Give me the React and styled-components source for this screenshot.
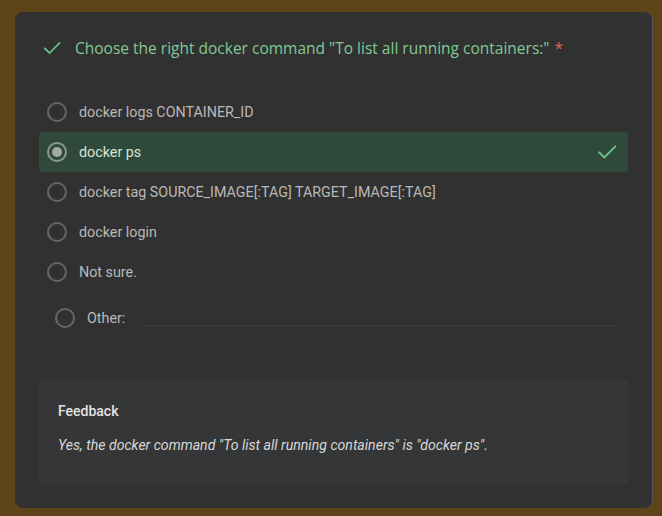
import React from "react";
import styled, { createGlobalStyle } from "styled-components";

const Global = createGlobalStyle`
  html, body { margin: 0; padding: 0; background: #5e4419; }
  body { width: 662px; height: 516px; overflow: hidden; font-family: Roboto, "Liberation Sans", sans-serif; }
`;

const Page = styled.div`
  width: 662px;
  height: 516px;
  box-sizing: border-box;
  padding: 12px 9px 8px 15px;
  display: flex;
`;

const Card = styled.div`
  flex: 1;
  background: #313131;
  border-radius: 8px;
  border-right: 1px solid #55555e;
  box-sizing: border-box;
  padding: 26px 24px 24px 24px;
  display: flex;
  flex-direction: column;
`;

const Title = styled.div`
  display: flex;
  align-items: center;
  gap: 13px;
  padding-left: 3px;
  color: #81c995;
  font-family: "Open Sans", sans-serif;
  font-size: 15.5px;
  line-height: 20px;
  height: 20px;
`;

const Req = styled.span`
  color: #e06055;
  margin-left: 5px;
`;

const Options = styled.div`
  display: flex;
  flex-direction: column;
  margin-top: 34px;
`;

const Option = styled.div`
  display: flex;
  align-items: center;
  height: 40px;
  padding: 0 10px 0 8px;
  border-radius: 4px;
  background: ${(p) => (p.$selected ? "#2f4a3b" : "transparent")};
  color: ${(p) => (p.$selected ? "#d6e3d9" : "#b9b9b9")};
  font-size: 14.3px;
`;

const Radio = styled.span`
  width: 20px;
  height: 20px;
  box-sizing: border-box;
  border-radius: 50%;
  border: 2px solid ${(p) => (p.$checked ? "#8e9690" : "#666666")};
  display: flex;
  align-items: center;
  justify-content: center;
  flex-shrink: 0;
  margin-right: 12px;
  &::after {
    content: "";
    width: 10px;
    height: 10px;
    border-radius: 50%;
    background: #a3aaa5;
    display: ${(p) => (p.$checked ? "block" : "none")};
  }
`;

const Label = styled.span`
  flex: 1;
`;

const OtherRow = styled.div`
  display: flex;
  align-items: center;
  height: 40px;
  padding-left: 16px;
  margin-top: 9px;
  color: #b9b9b9;
  font-size: 14.3px;
`;

const OtherInput = styled.div`
  flex: 1;
  align-self: flex-end;
  margin: 0 10px 9px 20px;
  border-bottom: 1px dotted #4d4d4d;
`;

const Feedback = styled.div`
  margin-top: 45px;
  background: #353637;
  border-radius: 2px;
  padding: 22px 19px 30px 19px;
  display: flex;
  flex-direction: column;
  gap: 16px;
`;

const FbTitle = styled.div`
  color: #e3e3e3;
  font-size: 14px;
  font-weight: 500;
  line-height: 18px;
`;

const FbText = styled.div`
  color: #d8d8d8;
  font-size: 14.1px;
  font-style: italic;
  line-height: 18px;
`;

const Check = ({ size = 18 }) => (
  <svg width={size} height={size} viewBox="0 0 24 24" fill="none">
    <path d="M3.5 12.5l5.5 5.5L21 6" stroke="#6cc48c" strokeWidth="2" strokeLinecap="square" />
  </svg>
);

const options = [
  "docker logs CONTAINER_ID",
  "docker ps",
  "docker tag SOURCE_IMAGE[:TAG] TARGET_IMAGE[:TAG]",
  "docker login",
  "Not sure.",
];

export default function App() {
  return (
    <>
      <Global />
      <Page>
        <Card>
          <Title>
            <Check size={20} />
            <span>
              Choose the right docker command "To list all running containers:"
              <Req>*</Req>
            </span>
          </Title>
          <Options>
            {options.map((o, i) => (
              <Option key={o} $selected={i === 1}>
                <Radio $checked={i === 1} />
                <Label>{o}</Label>
                {i === 1 && <Check size={22} />}
              </Option>
            ))}
          </Options>
          <OtherRow>
            <Radio />
            <span>Other:</span>
            <OtherInput />
          </OtherRow>
          <Feedback>
            <FbTitle>Feedback</FbTitle>
            <FbText>
              Yes, the docker command "To list all running containers" is "docker ps".
            </FbText>
          </Feedback>
        </Card>
      </Page>
    </>
  );
}
